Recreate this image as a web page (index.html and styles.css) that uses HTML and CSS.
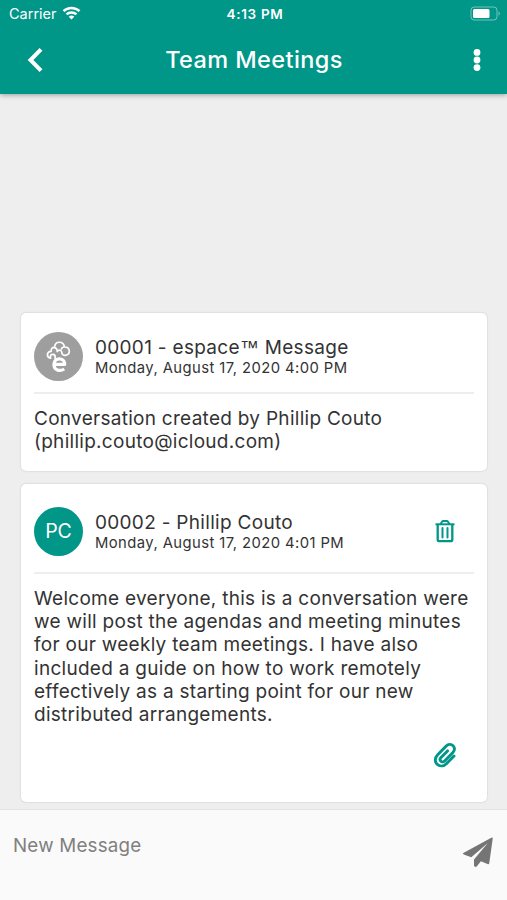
FILE: index.html
```html
<!DOCTYPE html>
<html lang="en">
<head>
  <meta charset="UTF-8">
  <meta name="viewport" content="width=device-width, initial-scale=1">
  <title>Team Meetings</title>
  <link rel="stylesheet" href="styles.css">
</head>
<body>
  <header class="header">
    <div class="status-bar">
      <div class="carrier">
        <span>Carrier</span>
        <svg width="19" height="14" viewBox="0 0 18 14" fill="none" stroke="#fff" stroke-width="2.5">
          <path d="M1 5.2a11.4 11.4 0 0 1 16 0"/>
          <path d="M4 8.4a7.2 7.2 0 0 1 10 0"/>
          <path d="M9 13.5L6.2 10.8a4 4 0 0 1 5.6 0z" fill="#fff" stroke="none"/>
        </svg>
      </div>
      <span class="clock">4:13 PM</span>
      <svg class="battery" width="31" height="16" viewBox="0 0 31 16">
        <rect x="1" y="1" width="26" height="13" rx="3.2" fill="none" stroke="#fff" stroke-opacity=".45"/>
        <rect x="3" y="3" width="16.5" height="9" rx="1.5" fill="#fff"/>
        <path d="M28.6 5.3v4.4c1.6-.7 1.6-3.7 0-4.4z" fill="#fff" fill-opacity=".5"/>
      </svg>
    </div>
    <div class="toolbar">
      <svg width="18" height="26" viewBox="0 0 18 26" fill="none" stroke="#fff" stroke-width="4">
        <path d="M15 2.4L4.5 13 15 23.6"/>
      </svg>
      <h1>Team Meetings</h1>
      <svg width="8" height="24" viewBox="0 0 8 24" fill="#fff">
        <circle cx="4" cy="4.4" r="3.4"/>
        <circle cx="4" cy="12" r="3.4"/>
        <circle cx="4" cy="19.6" r="3.4"/>
      </svg>
    </div>
  </header>

  <main class="messages">
    <article class="card">
      <div class="card-header">
        <div class="avatar avatar-system">
          <svg width="49" height="49" viewBox="0 0 49 49" fill="none" stroke="#fff" stroke-linecap="round" stroke-linejoin="round">
            <path stroke-width="1.7" d="M16.5 26.2c-4-.6-4.3-6.600.6-6.900-.1-2.700 1.300-4.100 3.400-4 .6-6.900 9.200-6.500 9.900-.3 5.600-.3 6.600 6.800 1.900 8.200-2.700.6-4-.5-4.500-1.900M16.500 26.200v-1.900c0-2.700 4.600-2.700 4.600.3v1.600M19.800 15.400c2 .3 3.100 1.400 3.400 3.200M23.200 19.600c1.600-2.200 4.200-1.700 4.700 1.100M30.400 15c-1.700 0-2.700.7-3 2"/>
            <path stroke-width="3.2" stroke-linecap="butt" d="M20.300 32.300h10.500c0-7.200-10.900-7.300-10.900 0 0 6.800 6.600 7.200 10.300 4.700"/>
          </svg>
        </div>
        <div class="card-title">
          <h2>00001 - espace<span class="tm">™</span> Message</h2>
          <time>Monday, August 17, 2020 4:00 PM</time>
        </div>
      </div>
      <p>Conversation created by Phillip Couto<br>(phillip.couto@icloud.com)</p>
    </article>

    <article class="card card-post">
      <div class="card-header">
        <div class="avatar">PC</div>
        <div class="card-title">
          <h2>00002 - Phillip Couto</h2>
          <time>Monday, August 17, 2020 4:01 PM</time>
        </div>
        <svg class="trash" width="20" height="24" viewBox="0 0 20 24" fill="none" stroke="#009688" stroke-width="2">
          <path d="M.5 5.300h19"/>
          <path d="M5.500 5L7 2.700Q7.400 2 8.200 2h3.600q.8 0 1.200.7L14.500 5"/>
          <path d="M2.700 5.500v15q0 1.700 1.700 1.700h11.200q1.700 0 1.700-1.700v-15" stroke-width="2.300"/>
          <path d="M7.500 9v9.500M12.500 9v9.500" stroke-linecap="round"/>
        </svg>
      </div>
      <p>Welcome everyone, this is a conversation were<br>we will post the agendas and meeting minutes<br>for our weekly team meetings. I have also<br>included a guide on how to work remotely<br>effectively as a starting point for our new<br>distributed arrangements.</p>
      <div class="attachments">
        <svg width="24" height="26" viewBox="0 0 24 26" fill="none" stroke="#009688" stroke-width="2.900" stroke-linecap="round" stroke-linejoin="round">
          <path d="M21 14l-7.300 7.400c-3 3-7 3.300-9.600.8s-2.300-6.400.6-9.400l8.500-8.700c2-2 5-2.200 6.900-.4s1.800 4.800-.2 6.800l-8.300 8.500c-1.200 1.200-2.800 1.200-3.800.2s-.9-2.500.2-3.700l6.500-6.600"/>
        </svg>
      </div>
    </article>
  </main>

  <footer class="composer">
    <span>New Message</span>
    <svg width="31" height="31" viewBox="0 0 31 31" fill="#757575">
      <path d="M28.300.8q1.600-.8 1.400 1L26.300 26q-.3 1.700-1.800 1l-6.600-2.700-4 5q-2.200 1.700-2.900-.8v-6L24.800 6 8.300 20.300.8 17.500q-1.700-.8 0-1.800z"/>
    </svg>
  </footer>
</body>
</html>
```
FILE: styles.css
```css
* {
  box-sizing: border-box;
}
body {
  margin: 0;
  height: 900px;
  display: flex;
  flex-direction: column;
  overflow: hidden;
  background-color: #eee;
  color: #333;
  font-family: Inter, "Liberation Sans", sans-serif;
}
h1, h2, p {
  margin: 0;
  font-weight: 400;
}
svg {
  display: block;
  flex: none;
}
.header {
  flex: none;
  height: 94px;
  background-color: #009688;
  color: white;
  box-shadow: 0 1px 5px rgba(0, 0, 0, 0.35);
}
.status-bar {
  display: grid;
  grid-template-columns: 1fr auto 1fr;
  align-items: center;
  height: 27px;
  padding: 0 6px 0 9px;
}
.carrier {
  display: flex;
  align-items: center;
  gap: 5px;
  font-size: 14.5px;
}
.carrier svg {
  margin-top: -2px;
}
.clock {
  font-weight: 600;
  font-size: 13.5px;
  letter-spacing: 0.7px;
}
.battery {
  justify-self: end;
}
.toolbar {
  display: flex;
  align-items: center;
  justify-content: space-between;
  height: 66px;
  padding: 0 26px;
}
.toolbar h1 {
  margin: -2px 9px 0 0;
  font-size: 23.5px;
  font-weight: 500;
  letter-spacing: 0.4px;
}
.messages {
  flex: 1;
  display: flex;
  flex-direction: column;
  justify-content: flex-end;
  gap: 13px;
  padding: 0 20px 7px 21px;
}
.card {
  height: 158px;
  padding: 0 13px;
  background-color: white;
  border-radius: 5px;
  box-shadow: 0 0 2px rgba(0, 0, 0, 0.2);
}
.card-post {
  height: 318px;
}
.card-header {
  display: flex;
  align-items: center;
  height: 81px;
  padding-top: 8px;
  border-bottom: 2px solid #eee;
}
.card-post .card-header {
  height: 90px;
  padding-top: 6px;
}
.avatar {
  flex: none;
  display: flex;
  align-items: center;
  justify-content: center;
  width: 49px;
  height: 49px;
  border-radius: 50%;
  background-color: #009688;
  color: white;
  font-size: 19.5px;
}
.avatar-system {
  background-color: #9e9e9e;
}
.card-title {
  flex: 1;
  margin-left: 12px;
}
.card-title h2 {
  font-size: 19px;
  line-height: 23px;
  letter-spacing: 0.3px;
}
.tm {
  font-family: "Liberation Sans", sans-serif;
}
.card-title time {
  display: block;
  font-size: 14.8px;
  line-height: 18px;
  letter-spacing: 0.43px;
}
.trash {
  margin-right: 19.5px;
}
.card p {
  padding-top: 13px;
  font-size: 19px;
  line-height: 23.2px;
  letter-spacing: 0.28px;
  white-space: nowrap;
}
.attachments {
  display: flex;
  justify-content: flex-end;
  padding: 16px 17.5px 0 0;
}
.composer {
  flex: none;
  display: flex;
  justify-content: space-between;
  height: 91px;
  padding: 24px 13px 0 13px;
  background-color: #fafafa;
  border-top: 1px solid #e4e4e4;
  color: #808080;
  font-size: 18.8px;
  line-height: 24px;
  letter-spacing: 0.2px;
}
.composer svg {
  margin-top: 3px;
}
```
